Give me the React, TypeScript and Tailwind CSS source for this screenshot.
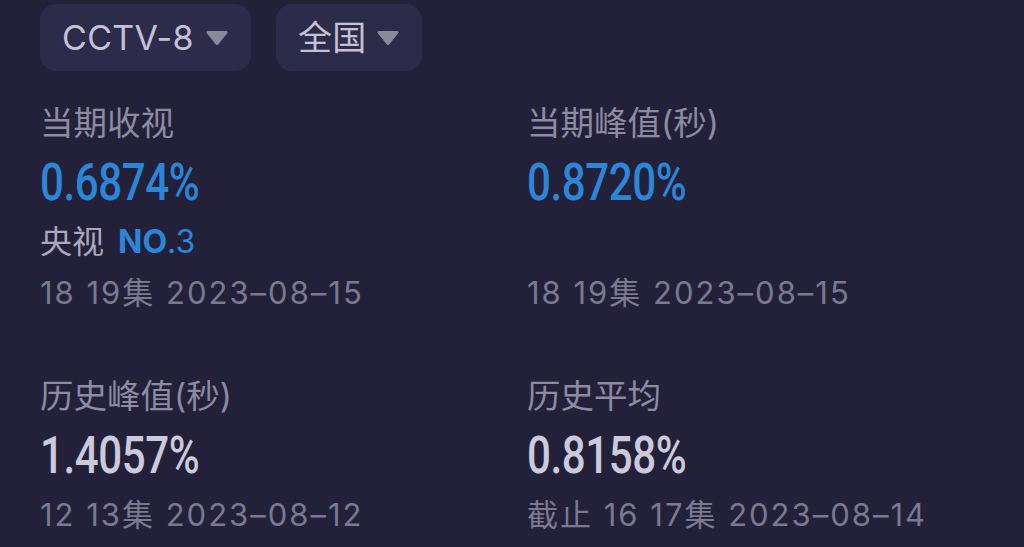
import { ReactNode } from 'react'

const font = { fontFamily: 'Inter, "Noto Sans CJK SC", sans-serif' }

function Chip({ label, width }: { label: string; width: string }) {
  return (
    <div className={`flex h-[67px] ${width} items-center justify-between rounded-[16px] bg-[#2d2b4a] pl-[22px] pr-[22px]`}>
      <span className="text-[34px] tracking-[0.3px] text-[#c3c2d4]">{label}</span>
      <svg width="24" height="17" viewBox="0 0 24 17">
        <path d="M3 2 H21 Q23.5 2 22 4.5 L13.6 15 Q12 17 10.4 15 L2 4.5 Q0.5 2 3 2 Z" fill="#8a8999" />
      </svg>
    </div>
  )
}

function Stat({
  title,
  value,
  blue,
  extra,
  note,
  noteHeight = 'h-[59px] leading-[59px]',
}: {
  title: string
  value: string
  blue?: boolean
  extra?: ReactNode
  note: string
  noteHeight?: string
}) {
  return (
    <div className="flex flex-col">
      <div className="h-[59px] text-[33.5px] leading-[59px] text-[#8c8ba2]">{title}</div>
      <div
        className={`h-[59px] origin-left scale-x-[0.825] text-[51px] leading-[59px] font-medium tracking-[-0.5px] ${
          blue ? 'text-[#2b86d7]' : 'text-[#cbcadb]'
        }`}
        style={{ fontFamily: 'Roboto, sans-serif' }}
      >
        {value}
      </div>
      {extra}
      <div className={`${noteHeight} text-[31px] tracking-[2px] text-[#7a798f]`}>{note}</div>
    </div>
  )
}

export default function App() {
  return (
    <div className="h-[547px] w-[1024px] overflow-hidden bg-[#23213a] px-[40px] pt-[4px]" style={font}>
      <div className="flex gap-[25px]">
        <Chip label="CCTV-8" width="w-[211px]" />
        <Chip label="全国" width="w-[146px]" />
      </div>

      <div className="mt-[23px] grid grid-cols-[487px_1fr]">
        <Stat
          title="当期收视"
          value="0.6874%"
          blue
          note="18 19集 2023–08–15"
          noteHeight="h-[42px] leading-[42px]"
          extra={
            <div className="h-[60px] text-[32px] leading-[60px] text-[#a9a8bb]">
              央视
              <span className="ml-[14px] text-[#2b86d7]">
                <b className="font-bold">NO</b>.3
              </span>
            </div>
          }
        />
        <Stat
          title="当期峰值(秒)"
          value="0.8720%"
          blue
          note="18 19集 2023–08–15"
          noteHeight="h-[42px] leading-[42px]"
          extra={<div className="h-[60px]" />}
        />
      </div>

      <div className="mt-[53px] grid grid-cols-[487px_1fr]">
        <Stat title="历史峰值(秒)" value="1.4057%" note="12 13集 2023–08–12" />
        <Stat title="历史平均" value="0.8158%" note="截止 16 17集 2023–08–14" />
      </div>
    </div>
  )
}
